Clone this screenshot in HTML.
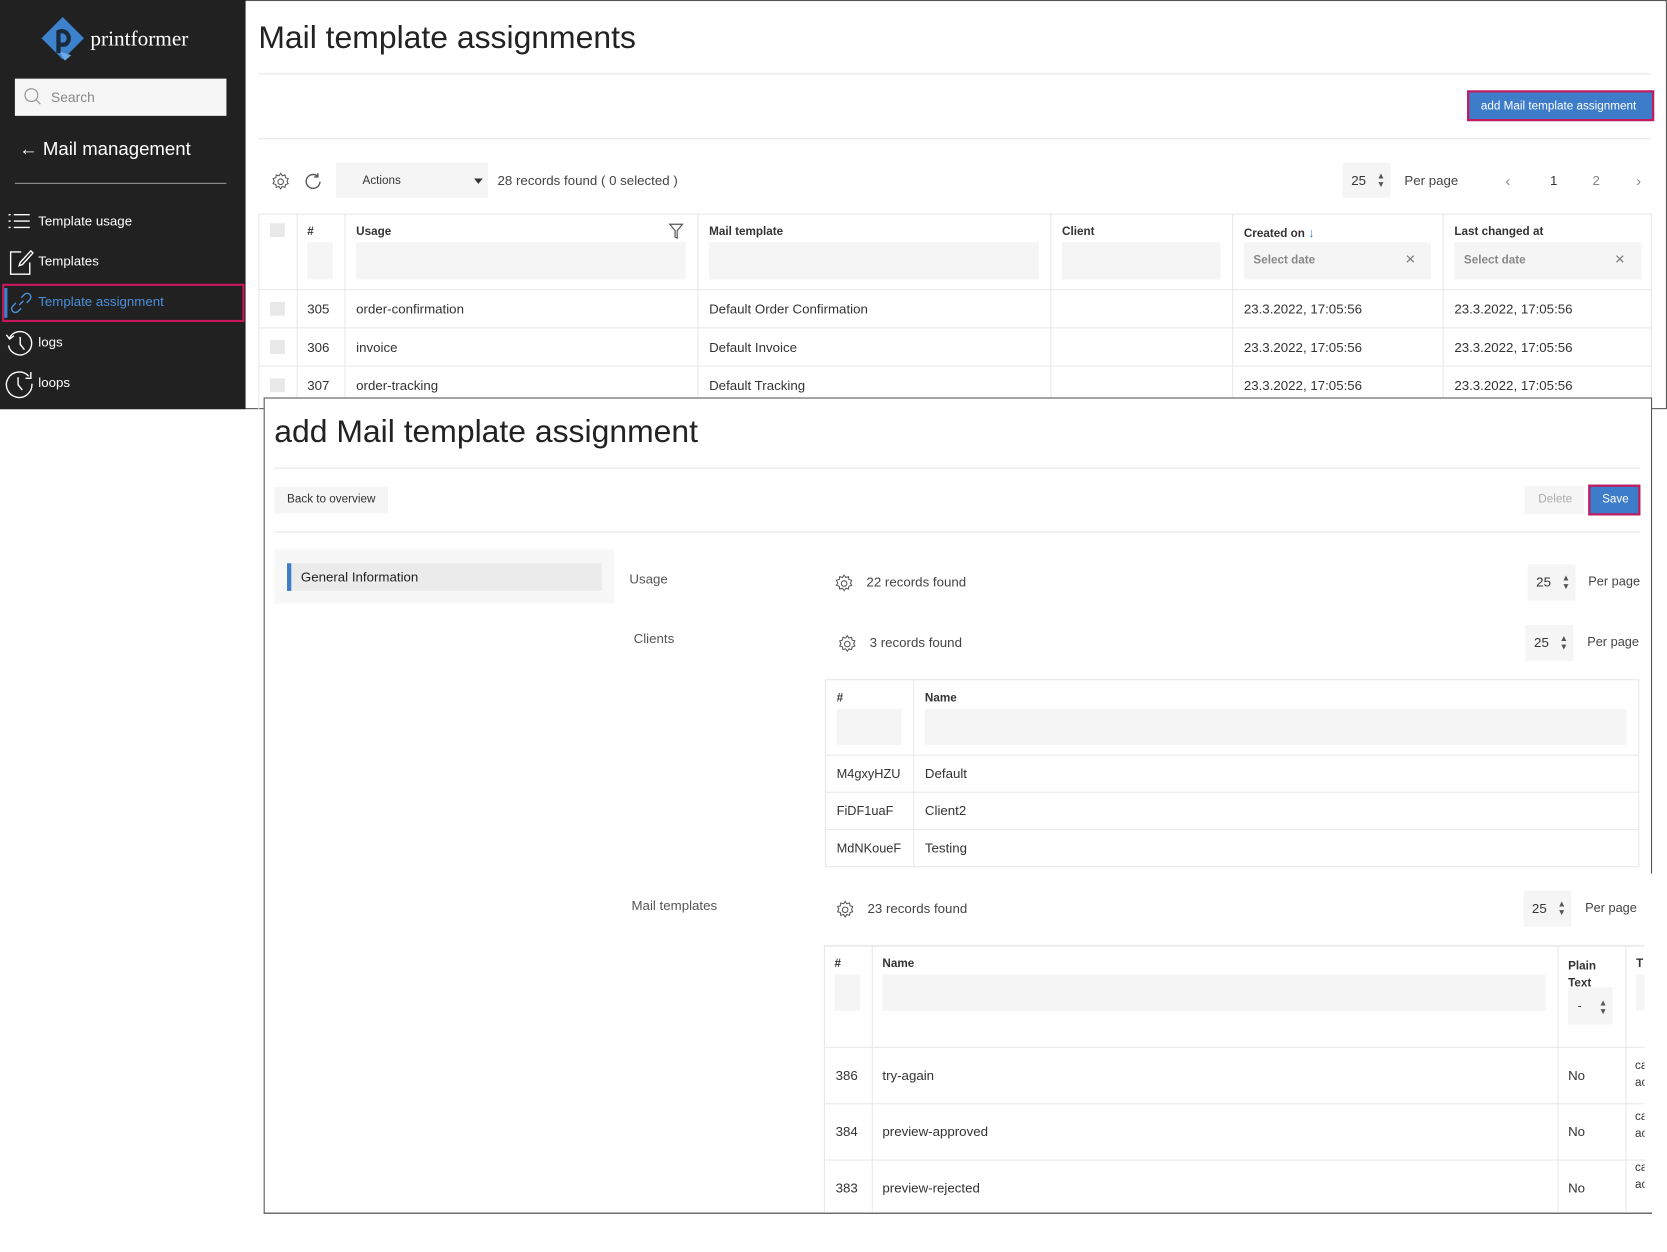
<!DOCTYPE html>
<html><head><meta charset="utf-8">
<style>
*{box-sizing:border-box;margin:0;padding:0}
html,body{width:1667px;height:1252px;overflow:hidden;background:#fff;font-family:"Liberation Sans",Arial,sans-serif;color:#333}
#s{position:absolute;left:0;top:0;width:1568px;height:1178px;transform:scale(1.0631,1.0628);transform-origin:0 0}
.a{position:absolute}
.t{position:absolute;white-space:nowrap;line-height:1}
.hr{position:absolute;height:1px;background:#e6e6e6}
.gb{position:absolute;background:#f5f5f5}
.vl{position:absolute;width:1px;background:#e8e8e8}
.hl{position:absolute;height:1px;background:#e8e8e8}
.b{font-weight:bold;font-size:11px;color:#333}
.c{font-size:12.5px;color:#333}
</style></head><body><div id="s">

<div class="a" style="left:0;top:0;width:1568px;height:385px;border:1px solid #555;background:#fff"></div>
<div class="a" style="left:0;top:0;width:231px;height:385px;background:#212121"></div>
<svg class="a" style="left:37px;top:14px" width="44" height="46" viewBox="0 0 44 46">
<polygon points="22,2 42,22 22,42 2,22" fill="#3d82cc"/>
<polygon points="18,34 30,38 24,43" fill="#6aa9e6"/>
<path d="M18 36 V16 a6 6 0 1 1 6 12 h-4" fill="none" stroke="#1b2a3a" stroke-width="4"/>
</svg>
<div class="t" style="left:85px;top:27px;font-family:'Liberation Serif',serif;font-size:20px;color:#fff">printformer</div>
<div class="a" style="left:14px;top:74px;width:199px;height:35px;background:#f6f6f6"></div>
<svg class="a" style="left:22px;top:82px" width="18" height="18" viewBox="0 0 18 18"><circle cx="7.5" cy="7.5" r="6" fill="none" stroke="#999" stroke-width="1.2"/><line x1="12" y1="12" x2="16" y2="16" stroke="#999" stroke-width="1.2"/></svg>
<div class="t" style="left:48px;top:85px;font-size:13px;color:#888">Search</div>
<div class="t" style="left:18px;top:132px;font-size:17.5px;color:#fff">← Mail management</div>
<div class="a" style="left:14px;top:172px;width:199px;height:1px;background:#999"></div>

<svg class="a" style="left:7px;top:199px" width="22" height="18" viewBox="0 0 22 18" stroke="#fff" stroke-width="1.3"><line x1="1" y1="3" x2="3" y2="3"/><line x1="6" y1="3" x2="21" y2="3"/><line x1="1" y1="9" x2="3" y2="9"/><line x1="6" y1="9" x2="21" y2="9"/><line x1="1" y1="15" x2="3" y2="15"/><line x1="6" y1="15" x2="21" y2="15"/></svg>
<div class="t" style="left:36px;top:202px;font-size:12.5px;color:#fff">Template usage</div>
<svg class="a" style="left:8px;top:234px" width="24" height="26" viewBox="0 0 24 26" fill="none" stroke="#fff" stroke-width="1.3"><path d="M12 3H2V24H20V13"/><path d="M21 2 L23 4 L13 15 L10 16 L11 13 Z"/></svg>
<div class="t" style="left:36px;top:240px;font-size:12.5px;color:#fff">Templates</div>
<div class="a" style="left:2px;top:267px;width:228px;height:36px;border:2px solid #c8175d"></div>
<div class="a" style="left:4px;top:271px;width:3px;height:28px;background:#3d82cc"></div>
<svg class="a" style="left:10px;top:275px" width="20" height="20" viewBox="0 0 20 20" fill="none" stroke="#4a90d9" stroke-width="1.3"><path d="M8 12 L12 8"/><path d="M10 5 L13 2 a3 3 0 0 1 5 5 L15 10"/><path d="M10 15 L7 18 a3 3 0 0 1 -5 -5 L5 10"/></svg>
<div class="t" style="left:36px;top:278px;font-size:12.5px;color:#4a90d9">Template assignment</div>
<svg class="a" style="left:5px;top:309px" width="28" height="28" viewBox="0 0 28 28" fill="none" stroke="#fff" stroke-width="1.3"><path d="M4 9 A11 11 0 1 1 3 16"/><path d="M1 6 L4 10 L8 7"/><path d="M14 8 V15 L18 20"/></svg>
<div class="t" style="left:36px;top:316px;font-size:12.5px;color:#fff">logs</div>
<svg class="a" style="left:4px;top:347px" width="28" height="28" viewBox="0 0 28 28" fill="none" stroke="#fff" stroke-width="1.3"><path d="M23 7 A12 12 0 1 0 26 14"/><path d="M25 3 V9 H20"/><path d="M13 8 V15 L17 20"/></svg>
<div class="t" style="left:36px;top:354px;font-size:12.5px;color:#fff">loops</div>

<div class="t" style="left:243px;top:21px;font-size:30px;color:#222">Mail template assignments</div>
<div class="hr" style="left:243px;top:69px;width:1310px"></div>
<div class="a" style="left:1380px;top:85px;width:176px;height:29px;border:2px solid #c8175d;background:#3d7cc9"></div>
<div class="t" style="left:1393px;top:95px;font-size:11px;color:#fff">add Mail template assignment</div>
<div class="hr" style="left:243px;top:130px;width:1310px"></div>

<svg class="a" style="left:255px;top:162px" width="18" height="18" viewBox="0 0 24 24" fill="none" stroke="#555" stroke-width="1.3"><circle cx="12" cy="12" r="3.5"/><path d="M12 1.5l2 3 3.5-1 .5 3.5 3.5 1-1.5 3.5 1.5 3-3.5 1-.5 3.5-3.5-1-2 3-2-3-3.5 1-.5-3.5-3.5-1 1.5-3-1.5-3.5 3.5-1 .5-3.5 3.5 1z"/></svg>
<svg class="a" style="left:286px;top:162px" width="17" height="17" viewBox="0 0 17 17" fill="none" stroke="#555" stroke-width="1.3"><path d="M13 4 A6.5 6.5 0 1 0 15 9"/><path d="M13 1 V4.5 H9.5"/></svg>
<div class="gb" style="left:316px;top:153px;width:143px;height:33px"></div>
<div class="t" style="left:341px;top:165px;font-size:11px;color:#333">Actions</div>
<div class="a" style="left:446px;top:168px;border-left:4px solid transparent;border-right:4px solid transparent;border-top:5px solid #333"></div>
<div class="t" style="left:468px;top:164px;font-size:12.5px;color:#444">28 records found ( 0 selected )</div>
<div class="gb" style="left:1263px;top:153px;width:45px;height:33px"></div>
<div class="t" style="left:1271px;top:164px;font-size:12.5px">25</div>
<div class="t" style="left:1295px;top:162px;font-size:8px;color:#555">▲<br>▼</div>
<div class="t" style="left:1321px;top:164px;font-size:12.5px;color:#444">Per page</div>
<div class="t" style="left:1416px;top:163px;font-size:14px;color:#888">‹</div>
<div class="t" style="left:1458px;top:164px;font-size:12.5px">1</div>
<div class="t" style="left:1498px;top:164px;font-size:12.5px;color:#888">2</div>
<div class="t" style="left:1539px;top:163px;font-size:14px;color:#888">›</div>

<div class="a" style="left:243px;top:201px;width:1311px;height:184px;border:1px solid #e8e8e8;border-bottom:none"></div>
<div class="vl" style="left:279px;top:201px;height:184px"></div>
<div class="vl" style="left:324px;top:201px;height:184px"></div>
<div class="vl" style="left:656px;top:201px;height:184px"></div>
<div class="vl" style="left:988px;top:201px;height:184px"></div>
<div class="vl" style="left:1159px;top:201px;height:184px"></div>
<div class="vl" style="left:1357px;top:201px;height:184px"></div>
<div class="hl" style="left:243px;top:272px;width:1311px"></div>
<div class="hl" style="left:243px;top:308px;width:1311px"></div>
<div class="hl" style="left:243px;top:344px;width:1311px"></div>
<div class="a" style="left:254px;top:210px;width:14px;height:13px;background:#e8e8e8"></div>
<div class="t b" style="left:289px;top:213px">#</div>
<div class="gb" style="left:289px;top:228px;width:24px;height:35px"></div>
<div class="t b" style="left:335px;top:213px">Usage</div>
<svg class="a" style="left:629px;top:210px" width="14" height="15" viewBox="0 0 14 15" fill="none" stroke="#555" stroke-width="1.1"><path d="M1 1 H13 L8 7 V14 L6 13 V7 Z"/></svg>
<div class="gb" style="left:335px;top:228px;width:310px;height:35px"></div>
<div class="t b" style="left:667px;top:213px">Mail template</div>
<div class="gb" style="left:667px;top:228px;width:310px;height:35px"></div>
<div class="t b" style="left:999px;top:213px">Client</div>
<div class="gb" style="left:999px;top:228px;width:149px;height:35px"></div>
<div class="t b" style="left:1170px;top:213px">Created on <span style="color:#3d82cc;font-weight:normal;font-size:12px">↓</span></div>
<div class="gb" style="left:1170px;top:228px;width:176px;height:35px"></div>
<div class="t b" style="left:1179px;top:240px;color:#888">Select date</div>
<div class="t" style="left:1322px;top:237px;font-size:16px;color:#777">×</div>
<div class="t b" style="left:1368px;top:213px">Last changed at</div>
<div class="gb" style="left:1368px;top:228px;width:176px;height:35px"></div>
<div class="t b" style="left:1377px;top:240px;color:#888">Select date</div>
<div class="t" style="left:1519px;top:237px;font-size:16px;color:#777">×</div>

<div class="a" style="left:254px;top:284px;width:14px;height:13px;background:#e8e8e8"></div>
<div class="t c" style="left:289px;top:285px">305</div><div class="t c" style="left:335px;top:285px">order-confirmation</div><div class="t c" style="left:667px;top:285px">Default Order Confirmation</div><div class="t c" style="left:1170px;top:285px">23.3.2022, 17:05:56</div><div class="t c" style="left:1368px;top:285px">23.3.2022, 17:05:56</div>
<div class="a" style="left:254px;top:320px;width:14px;height:13px;background:#e8e8e8"></div>
<div class="t c" style="left:289px;top:321px">306</div><div class="t c" style="left:335px;top:321px">invoice</div><div class="t c" style="left:667px;top:321px">Default Invoice</div><div class="t c" style="left:1170px;top:321px">23.3.2022, 17:05:56</div><div class="t c" style="left:1368px;top:321px">23.3.2022, 17:05:56</div>
<div class="a" style="left:254px;top:356px;width:14px;height:13px;background:#e8e8e8"></div>
<div class="t c" style="left:289px;top:357px">307</div><div class="t c" style="left:335px;top:357px">order-tracking</div><div class="t c" style="left:667px;top:357px">Default Tracking</div><div class="t c" style="left:1170px;top:357px">23.3.2022, 17:05:56</div><div class="t c" style="left:1368px;top:357px">23.3.2022, 17:05:56</div>

<div class="a" style="left:248px;top:374px;width:1306px;height:768px;background:#fff;border-left:1px solid #555;border-top:1px solid #555;border-bottom:1px solid #333"></div>
<div class="a" style="left:1553px;top:374px;width:1px;height:448px;background:#555"></div>
<div class="t" style="left:258px;top:392px;font-size:30px;color:#222">add Mail template assignment</div>
<div class="hr" style="left:258px;top:440px;width:1285px"></div>
<div class="gb" style="left:258px;top:458px;width:107px;height:25px"></div>
<div class="t" style="left:270px;top:465px;font-size:11px;color:#333">Back to overview</div>
<div class="gb" style="left:1434px;top:457px;width:56px;height:27px"></div>
<div class="t" style="left:1447px;top:465px;font-size:11px;color:#aaa">Delete</div>
<div class="a" style="left:1494px;top:456px;width:49px;height:29px;border:2px solid #c8175d;background:#3d7cc9"></div>
<div class="t" style="left:1507px;top:465px;font-size:11px;color:#fff">Save</div>
<div class="hr" style="left:258px;top:500px;width:1285px"></div>

<div class="a" style="left:258px;top:517px;width:320px;height:51px;background:#f7f7f7"></div>
<div class="a" style="left:270px;top:530px;width:296px;height:26px;background:#ebebeb"></div>
<div class="a" style="left:270px;top:530px;width:4px;height:26px;background:#3d7cc9"></div>
<div class="t" style="left:283px;top:537px;font-size:12.5px;color:#222">General Information</div>

<div class="t" style="left:592px;top:539px;font-size:12.5px;color:#555">Usage</div>
<div class="t" style="left:596px;top:595px;font-size:12.5px;color:#555">Clients</div>
<div class="t" style="left:594px;top:846px;font-size:12.5px;color:#555">Mail templates</div>

<svg class="a" style="left:785px;top:540px" width="18" height="18" viewBox="0 0 24 24" fill="none" stroke="#555" stroke-width="1.3"><circle cx="12" cy="12" r="3.5"/><path d="M12 1.5l2 3 3.5-1 .5 3.5 3.5 1-1.5 3.5 1.5 3-3.5 1-.5 3.5-3.5-1-2 3-2-3-3.5 1-.5-3.5-3.5-1 1.5-3-1.5-3.5 3.5-1 .5-3.5 3.5 1z"/></svg>
<div class="t" style="left:815px;top:542px;font-size:12.5px;color:#444">22 records found</div>
<div class="gb" style="left:1437px;top:531px;width:45px;height:34px"></div>
<div class="t" style="left:1445px;top:542px;font-size:12.5px">25</div>
<div class="t" style="left:1469px;top:540px;font-size:8px;color:#555">▲<br>▼</div>
<div class="t" style="left:1494px;top:541px;font-size:12px;color:#444">Per page</div>

<svg class="a" style="left:788px;top:597px" width="18" height="18" viewBox="0 0 24 24" fill="none" stroke="#555" stroke-width="1.3"><circle cx="12" cy="12" r="3.5"/><path d="M12 1.5l2 3 3.5-1 .5 3.5 3.5 1-1.5 3.5 1.5 3-3.5 1-.5 3.5-3.5-1-2 3-2-3-3.5 1-.5-3.5-3.5-1 1.5-3-1.5-3.5 3.5-1 .5-3.5 3.5 1z"/></svg>
<div class="t" style="left:818px;top:599px;font-size:12.5px;color:#444">3 records found</div>
<div class="gb" style="left:1435px;top:588px;width:45px;height:34px"></div>
<div class="t" style="left:1443px;top:599px;font-size:12.5px">25</div>
<div class="t" style="left:1467px;top:597px;font-size:8px;color:#555">▲<br>▼</div>
<div class="t" style="left:1493px;top:598px;font-size:12px;color:#444">Per page</div>

<div class="a" style="left:776px;top:639px;width:766px;height:177px;border:1px solid #e8e8e8"></div>
<div class="vl" style="left:859px;top:639px;height:177px"></div>
<div class="hl" style="left:776px;top:710px;width:766px"></div>
<div class="hl" style="left:776px;top:745px;width:766px"></div>
<div class="hl" style="left:776px;top:780px;width:766px"></div>
<div class="t b" style="left:787px;top:652px">#</div>
<div class="gb" style="left:787px;top:667px;width:61px;height:34px"></div>
<div class="t b" style="left:870px;top:652px">Name</div>
<div class="gb" style="left:870px;top:667px;width:660px;height:34px"></div>
<div class="t c" style="left:787px;top:722px;font-size:12px">M4gxyHZU</div><div class="t c" style="left:870px;top:722px">Default</div>
<div class="t c" style="left:787px;top:757px;font-size:12px">FiDF1uaF</div><div class="t c" style="left:870px;top:757px">Client2</div>
<div class="t c" style="left:787px;top:792px;font-size:12px">MdNKoueF</div><div class="t c" style="left:870px;top:792px">Testing</div>

<svg class="a" style="left:786px;top:847px" width="18" height="18" viewBox="0 0 24 24" fill="none" stroke="#555" stroke-width="1.3"><circle cx="12" cy="12" r="3.5"/><path d="M12 1.5l2 3 3.5-1 .5 3.5 3.5 1-1.5 3.5 1.5 3-3.5 1-.5 3.5-3.5-1-2 3-2-3-3.5 1-.5-3.5-3.5-1 1.5-3-1.5-3.5 3.5-1 .5-3.5 3.5 1z"/></svg>
<div class="t" style="left:816px;top:849px;font-size:12.5px;color:#444">23 records found</div>
<div class="gb" style="left:1433px;top:838px;width:45px;height:34px"></div>
<div class="t" style="left:1441px;top:849px;font-size:12.5px">25</div>
<div class="t" style="left:1465px;top:847px;font-size:8px;color:#555">▲<br>▼</div>
<div class="t" style="left:1491px;top:848px;font-size:12px;color:#444">Per page</div>

<div class="a" style="left:775px;top:889px;width:772px;height:252px;border-left:1px solid #e8e8e8;border-top:2px solid #eee"></div>
<div class="vl" style="left:820px;top:889px;height:252px"></div>
<div class="vl" style="left:1465px;top:889px;height:252px"></div>
<div class="vl" style="left:1529px;top:889px;height:252px"></div>
<div class="hl" style="left:775px;top:985px;width:772px"></div>
<div class="hl" style="left:775px;top:1038px;width:772px"></div>
<div class="hl" style="left:775px;top:1091px;width:772px"></div>
<div class="t b" style="left:785px;top:902px">#</div>
<div class="gb" style="left:785px;top:917px;width:24px;height:34px"></div>
<div class="t b" style="left:830px;top:902px">Name</div>
<div class="gb" style="left:830px;top:917px;width:624px;height:34px"></div>
<div class="t b" style="left:1475px;top:901px;line-height:16px">Plain<br>Text</div>
<div class="gb" style="left:1475px;top:929px;width:42px;height:35px"></div>
<div class="t" style="left:1484px;top:942px;font-size:11px">-</div>
<div class="t" style="left:1504px;top:940px;font-size:8px;color:#555">▲<br>▼</div>
<div class="t b" style="left:1539px;top:902px">T</div>
<div class="gb" style="left:1539px;top:917px;width:8px;height:34px"></div>
<div class="t c" style="left:786px;top:1006px">386</div><div class="t c" style="left:830px;top:1006px">try-again</div><div class="t c" style="left:1475px;top:1006px">No</div>
<div class="t c" style="left:786px;top:1059px">384</div><div class="t c" style="left:830px;top:1059px">preview-approved</div><div class="t c" style="left:1475px;top:1059px">No</div>
<div class="t c" style="left:786px;top:1112px">383</div><div class="t c" style="left:830px;top:1112px">preview-rejected</div><div class="t c" style="left:1475px;top:1112px">No</div>
<div class="a" style="left:1538px;top:995px;width:9px;height:140px;overflow:hidden;font-size:11px;line-height:16px;color:#333">ca<br>ac<br><br>ca<br>ac<br><br>ca<br>ac</div>

</div></body></html>
